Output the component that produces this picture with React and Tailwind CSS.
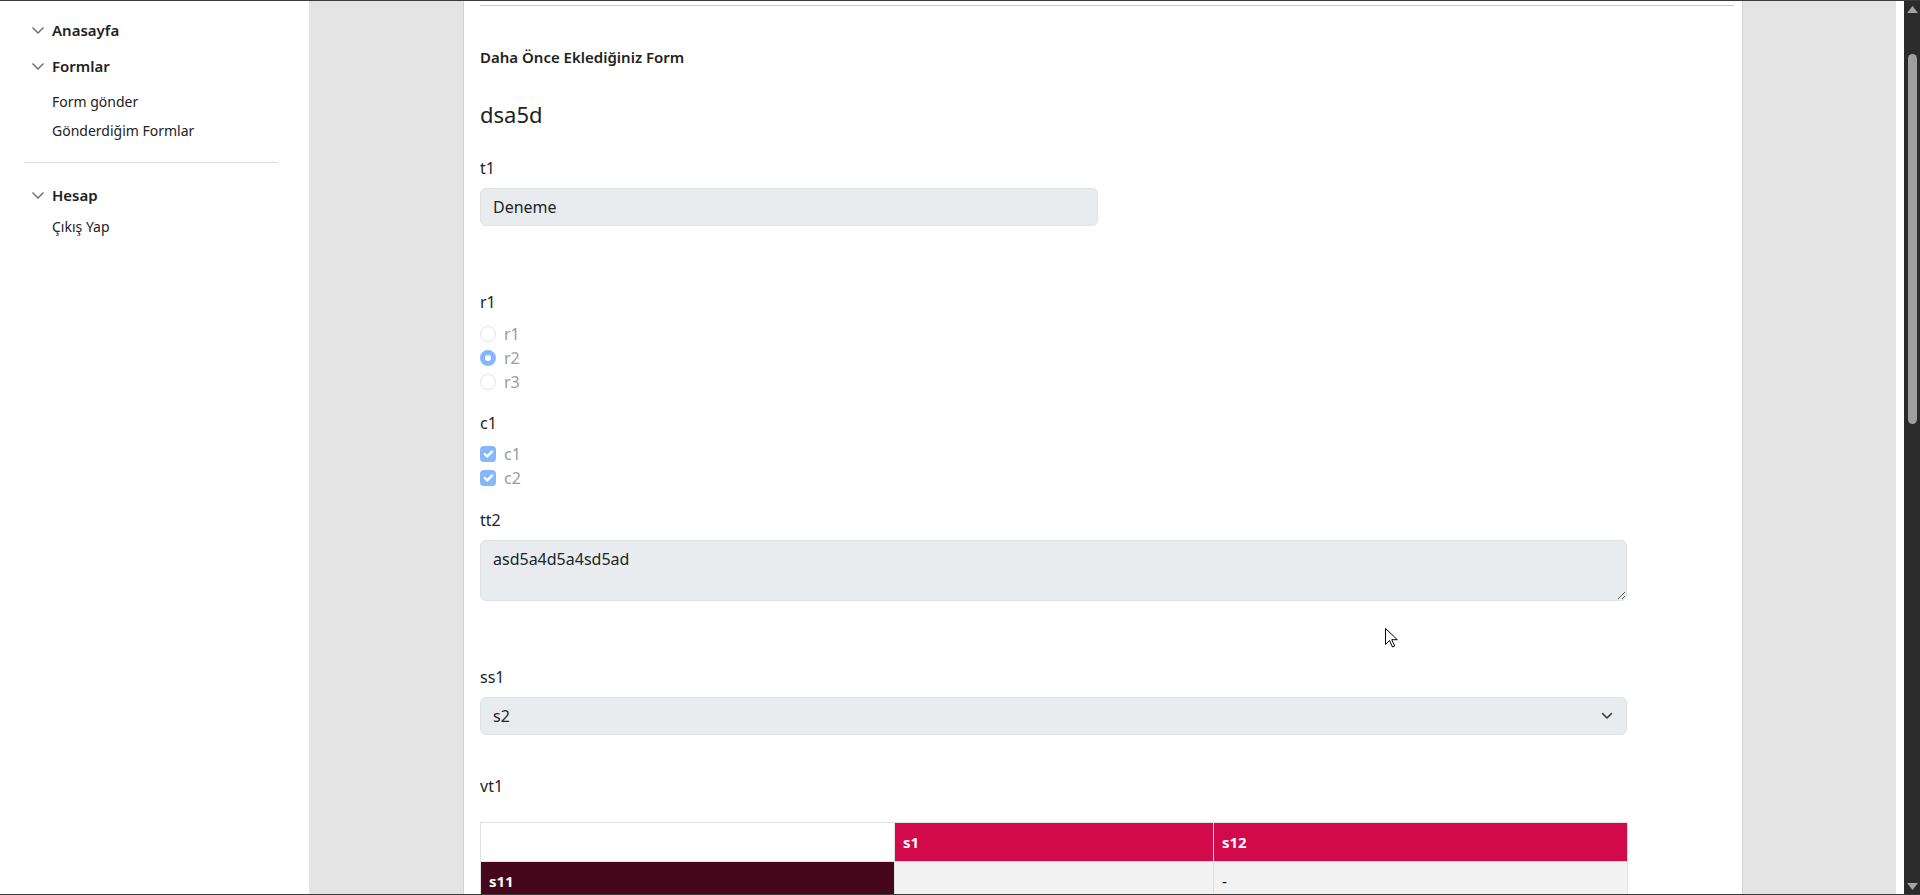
import React from "react";

const Chevron = () => (
  <svg width="12" height="12" viewBox="0 0 12 12" fill="none" stroke="#6a6a6a" strokeWidth="1.4">
    <path d="M0.5 3.5l5.5 5.5 5.5-5.5" />
  </svg>
);

const Radio = ({ checked, label }) => (
  <div className="flex items-center h-6">
    {checked ? (
      <span className="w-4 h-4 rounded-full bg-[#86b7fe] flex items-center justify-center">
        <span className="w-[6px] h-[6px] rounded-full bg-white" />
      </span>
    ) : (
      <span className="w-4 h-4 rounded-full border border-[#e3e4e6] bg-white" />
    )}
    <span className="ml-2 text-[#9a9c9e]">{label}</span>
  </div>
);

const Check = ({ label }) => (
  <div className="flex items-center h-6">
    <span className="w-4 h-4 rounded-[4px] bg-[#86b7fe] flex items-center justify-center">
      <svg width="16" height="16" viewBox="0 0 20 20" fill="none" stroke="#fff" strokeWidth="3" strokeLinecap="round" strokeLinejoin="round">
        <path d="m6 10 3 3 6-6" />
      </svg>
    </span>
    <span className="ml-2 text-[#9a9c9e]">{label}</span>
  </div>
);

const SideHead = ({ children, className }) => (
  <div className={`flex items-center h-6 pl-8 gap-2 ${className}`}>
    <Chevron />
    <span className="text-[15px] font-semibold text-[#222]">{children}</span>
  </div>
);

const SideLink = ({ children, className }) => (
  <div className={`flex items-center h-[22px] pl-[52px] text-[14px] text-[#222] ${className}`}>{children}</div>
);

export default function App() {
  return (
    <div className="relative w-[1920px] h-[895px] overflow-hidden flex flex-col bg-white font-['Noto_Sans',sans-serif] text-[#212529]">
      <div className="h-px bg-[#3b3b3b]" />
      <div className="flex flex-1 min-h-0">
        {/* Sidebar */}
        <aside className="w-[309px] bg-white pt-[17px]">
          <SideHead>Anasayfa</SideHead>
          <SideHead className="mt-3">Formlar</SideHead>
          <SideLink className="mt-3">Form gönder</SideLink>
          <SideLink className="mt-[7px]">Gönderdiğim Formlar</SideLink>
          <div className="mt-[21px] ml-6 w-[254px] h-px bg-[#dcdcdc]" />
          <SideHead className="mt-5">Hesap</SideHead>
          <SideLink className="mt-[8px]">Çıkış Yap</SideLink>
        </aside>

        <div className="w-[155px] bg-[#e4e4e4] border-r border-[#d2d2d2]" />

        {/* Content */}
        <main className="w-[1278px] bg-white pl-4">
          <div className="mt-1 mr-2 h-px bg-[#c8c8c8]" />
          <div className="mt-10 text-[15px] leading-[22px] font-semibold text-[#222]">Daha Önce Eklediğiniz Form</div>
          <div className="mt-[32px] text-[22px] leading-[28px] text-[#222]">dsa5d</div>

          <div className="w-[1147px]">
            <div className="mt-[28px] leading-6">t1</div>
            <div className="mt-[8px] w-[618px] h-[38px] px-3 flex items-center bg-[#e9ecef] border border-[#dee2e6] rounded-md">
              Deneme
            </div>

            <div className="mt-16 leading-6">r1</div>
            <div className="mt-2">
              <Radio label="r1" />
              <Radio checked label="r2" />
              <Radio label="r3" />
            </div>

            <div className="mt-[17px] leading-6">c1</div>
            <div className="mt-[7px]">
              <Check label="c1" />
              <Check label="c2" />
            </div>

            <div className="mt-[18px] leading-6">tt2</div>
            <textarea
              readOnly
              value="asd5a4d5a4sd5ad"
              className="mt-2 block w-full h-[61px] px-3 py-[6px] leading-6 bg-[#e9ecef] border border-[#dee2e6] rounded-md outline-none text-[#212529]"
            />

            <div className="mt-[64px] leading-6">ss1</div>
            <div className="relative mt-2">
              <select
                disabled
                defaultValue="s2"
                className="block w-full h-[38px] pl-3 pr-9 appearance-none bg-[#e9ecef] border border-[#dee2e6] rounded-md text-[#212529] opacity-100"
              >
                <option value="s1">s1</option>
                <option value="s2">s2</option>
              </select>
              <svg className="absolute right-[14px] top-1/2 -translate-y-1/2" width="12" height="8" viewBox="0 0 12 8" fill="none" stroke="#343a40" strokeWidth="1.6" strokeLinecap="round" strokeLinejoin="round">
                <path d="M1.5 1.5l4.5 4.5 4.5-4.5" />
              </svg>
            </div>

            <div className="mt-[39px] leading-6">vt1</div>
            <table className="mt-6 w-full table-fixed border-collapse text-[15px]">
              <colgroup>
                <col className="w-[414px]" />
                <col className="w-[319px]" />
                <col className="w-[414px]" />
              </colgroup>
              <thead>
                <tr className="h-[39px]">
                  <th className="border border-[#dee2e6] bg-white" />
                  <th className="border border-[#dee2e6] bg-[#d20a4c] text-white font-bold text-left px-2">s1</th>
                  <th className="border border-[#dee2e6] bg-[#d20a4c] text-white font-bold text-left px-2">s12</th>
                </tr>
              </thead>
              <tbody>
                <tr className="h-[39px]">
                  <td className="border border-[#dee2e6] bg-[#46061c] text-white font-bold px-2">s11</td>
                  <td className="border border-[#dee2e6] bg-[#f2f2f2] px-2" />
                  <td className="border border-[#dee2e6] bg-[#f2f2f2] px-2 text-black">-</td>
                </tr>
              </tbody>
            </table>
          </div>
        </main>

        <div className="w-[154px] bg-[#e4e4e4] border-l border-[#d2d2d2]" />
        <div className="w-2 bg-white" />

        {/* Scrollbar */}
        <div className="w-4 bg-[#2b2b2b] flex flex-col items-center">
          <svg className="mt-[5px]" width="11" height="7" viewBox="0 0 11 7">
            <path d="M5.5 0L11 7H0z" fill="#a3a3a3" />
          </svg>
          <div className="mt-[41px] w-[9px] h-[370px] rounded-full bg-[#9f9f9f]" />
          <div className="flex-1" />
          <svg className="mb-[4px]" width="11" height="7" viewBox="0 0 11 7">
            <path d="M0 0h11L5.5 7z" fill="#a3a3a3" />
          </svg>
        </div>
      </div>
      <div className="h-px bg-[#3b3b3b]" />

      {/* mouse cursor */}
      <svg className="absolute left-[1385px] top-[628px]" width="13" height="20" viewBox="0 0 13 20">
        <path d="M0.5 0.5v16l4-4 3 6.5 2.2-1-3-6.3h5.6z" fill="#fff" stroke="#000" strokeWidth="1" strokeLinejoin="round" />
      </svg>
    </div>
  );
}
